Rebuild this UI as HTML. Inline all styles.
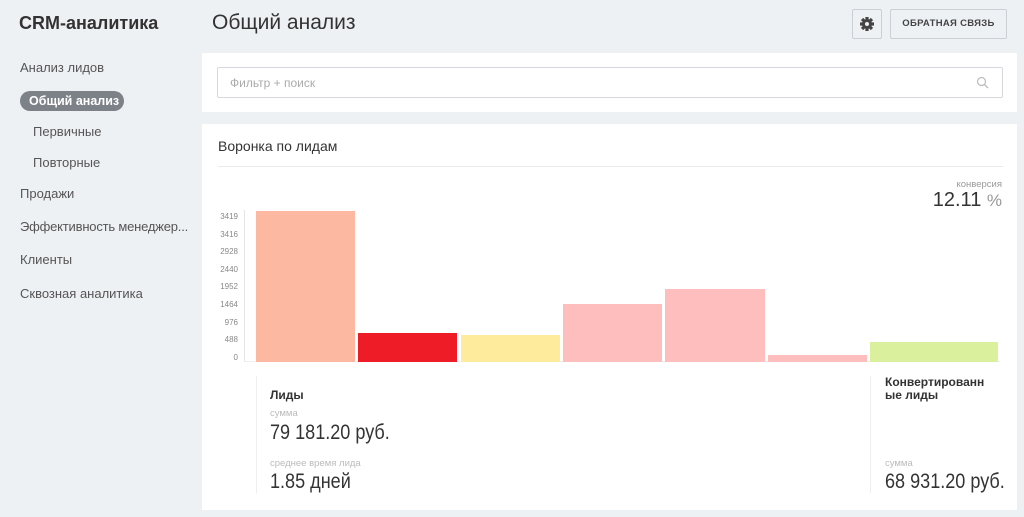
<!DOCTYPE html>
<html><head><meta charset="utf-8"><style>
*{margin:0;padding:0;box-sizing:border-box}
body{width:1024px;height:517px;background:#eef1f4;font-family:"Liberation Sans","DejaVu Sans",sans-serif;color:#333;position:relative;overflow:hidden}
.a{position:absolute;white-space:nowrap}
.nav{font-size:13px;color:#555}
.panel{position:absolute;background:#fff}
.yl{position:absolute;right:786px;font-size:8px;color:#888;width:30px;text-align:right}
.bar{position:absolute;bottom:155px}
.small{font-size:9.5px;color:#bbb}
.big{font-size:21px;color:#333;transform:scaleX(.86);transform-origin:left}
</style></head><body>
<div class="a" style="left:19px;top:13px;font-size:18px;font-weight:bold;color:#333">CRM-аналитика</div>
<div class="a nav" style="left:20px;top:60px">Анализ лидов</div>
<div class="a" style="left:20px;top:91px;width:104px;height:20px;border-radius:10px;background:#7d8288;color:#fff;font-size:12.5px;line-height:20px;padding-left:9px;font-weight:bold">Общий анализ</div>
<div class="a nav" style="left:33px;top:124px">Первичные</div>
<div class="a nav" style="left:33px;top:155px">Повторные</div>
<div class="a nav" style="left:20px;top:186px">Продажи</div>
<div class="a nav" style="left:20px;top:219px;letter-spacing:-.2px">Эффективность менеджер...</div>
<div class="a nav" style="left:20px;top:252px">Клиенты</div>
<div class="a nav" style="left:20px;top:286px">Сквозная аналитика</div>

<div class="a" style="left:212px;top:11px;font-size:21px;color:#333">Общий анализ</div>
<div class="a" style="left:852px;top:9px;width:30px;height:30px;border:1px solid #ccd0d5;border-radius:2px;background:#eef1f4">
<svg width="28" height="28" viewBox="0 0 28 28"><g transform="translate(14,14)" fill="#444"><circle r="5"/><g id="t"><rect x="-1.6" y="-7" width="3.2" height="3"/></g><use href="#t" transform="rotate(45)"/><use href="#t" transform="rotate(90)"/><use href="#t" transform="rotate(135)"/><use href="#t" transform="rotate(180)"/><use href="#t" transform="rotate(225)"/><use href="#t" transform="rotate(270)"/><use href="#t" transform="rotate(315)"/><circle r="2" fill="#eef1f4"/></g></svg></div>
<div class="a" style="left:890px;top:9px;width:117px;height:30px;border:1px solid #ccd0d5;border-radius:2px;font-size:9.5px;font-weight:bold;color:#444;line-height:28px;text-align:center;letter-spacing:.3px">ОБРАТНАЯ СВЯЗЬ</div>

<div class="panel" style="left:202px;top:53px;width:815px;height:59px"></div>
<div class="a" style="left:217px;top:67px;width:786px;height:31px;border:1px solid #d5d8dc;border-radius:2px;background:#fff"></div>
<div class="a" style="left:230px;top:76px;font-size:12px;color:#aaa">Фильтр + поиск</div>
<svg class="a" style="left:976px;top:76px" width="14" height="14" viewBox="0 0 14 14"><circle cx="5.5" cy="5.5" r="4" fill="none" stroke="#bbb" stroke-width="1.2"/><line x1="8.5" y1="8.5" x2="12" y2="12" stroke="#bbb" stroke-width="1.3"/></svg>

<div class="panel" style="left:202px;top:124px;width:815px;height:386px"></div>
<div class="a" style="left:218px;top:138px;font-size:14px;color:#333">Воронка по лидам</div>
<div class="a" style="left:218px;top:166px;width:785px;height:1px;background:#e8eaec"></div>
<div class="a" style="right:22px;top:179px;font-size:9.5px;color:#999">конверсия</div>
<div class="a" style="right:22px;top:189px;font-size:20px;color:#333">12.11 <span style="color:#999;font-size:17px">%</span></div>

<div class="a" style="left:244px;top:210px;width:1px;height:152px;background:#e5e5e5"></div>
<div class="a" style="left:244px;top:361px;width:756px;height:1px;background:#eee"></div>
<div class="yl" style="top:212px">3419</div>
<div class="yl" style="top:230px">3416</div>
<div class="yl" style="top:247px">2928</div>
<div class="yl" style="top:265px">2440</div>
<div class="yl" style="top:282px">1952</div>
<div class="yl" style="top:300px">1464</div>
<div class="yl" style="top:318px">976</div>
<div class="yl" style="top:335px">488</div>
<div class="yl" style="top:353px">0</div>
<div class="bar" style="left:256px;width:99px;top:211px;height:151px;background:#fdb8a2"></div>
<div class="bar" style="left:358px;width:99px;top:333px;height:29px;background:#ee1c27"></div>
<div class="bar" style="left:461px;width:99px;top:335px;height:27px;background:#feeb9b"></div>
<div class="bar" style="left:563px;width:99px;top:304px;height:58px;background:#febebe"></div>
<div class="bar" style="left:665px;width:100px;top:289px;height:73px;background:#febebe"></div>
<div class="bar" style="left:768px;width:99px;top:355px;height:7px;background:#febebe"></div>
<div class="bar" style="left:870px;width:128px;top:342px;height:20px;background:#dbf09c"></div>

<div class="a" style="left:256px;top:376px;width:1px;height:117px;background:#eee"></div>
<div class="a" style="left:870px;top:376px;width:1px;height:117px;background:#eee"></div>
<div class="a" style="left:270px;top:388px;font-size:12px;font-weight:bold;color:#333">Лиды</div>
<div class="a small" style="left:270px;top:408px">сумма</div>
<div class="a big" style="left:270px;top:421px">79 181.20 руб.</div>
<div class="a small" style="left:270px;top:458px">среднее время лида</div>
<div class="a big" style="left:270px;top:470px">1.85 дней</div>
<div class="a" style="left:885px;top:376px;font-size:12px;font-weight:bold;color:#333;line-height:13px;white-space:normal;width:100px">Конвертированн ые лиды</div>
<div class="a small" style="left:885px;top:458px">сумма</div>
<div class="a big" style="left:885px;top:470px">68 931.20 руб.</div>
</body></html>
